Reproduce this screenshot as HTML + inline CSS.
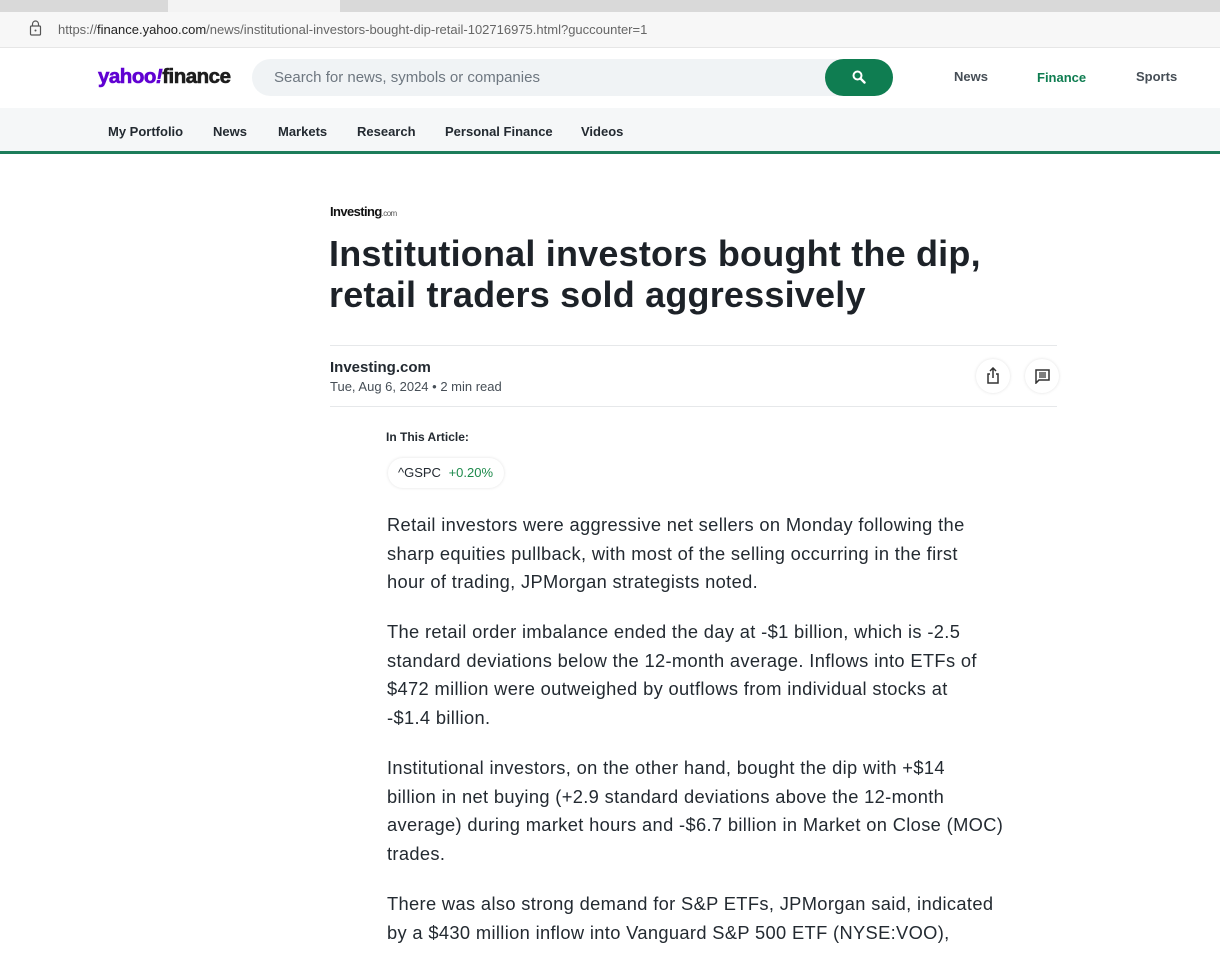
<!DOCTYPE html>
<html><head><meta charset="utf-8"><style>
*{margin:0;padding:0;box-sizing:border-box}
body{width:1220px;height:954px;overflow:hidden;background:#fff;font-family:"Liberation Sans",sans-serif;color:#232a31;position:relative}
.abs{position:absolute;white-space:nowrap}
.tabs{position:absolute;left:0;top:0;width:1220px;height:12px;background:#d9d9d9}
.tab{position:absolute;left:168px;top:0;width:172px;height:12px;background:#f3f3f3}
.addr{position:absolute;left:0;top:12px;width:1220px;height:36px;background:#f7f7f7;border-bottom:1px solid #e6e6e6}
.hdr{position:absolute;left:0;top:48px;width:1220px;height:60px;background:#fff}
.nav{position:absolute;left:0;top:108px;width:1220px;height:46px;background:#f5f7f8;border-bottom:3px solid #1d7d5a}
.search{position:absolute;left:252px;top:59px;width:640px;height:37px;background:#f0f3f5;border-radius:20px}
.sbtn{position:absolute;left:825px;top:59px;width:68px;height:37px;background:#0f7d51;border-radius:20px}
.nv{font-size:13px;font-weight:bold;color:#232a31;top:124px}
p.b{position:absolute;left:387px;font-size:18.3px;letter-spacing:0.35px;line-height:28.5px;color:#232a31;white-space:nowrap}
.circ{position:absolute;width:34px;height:34px;border-radius:50%;background:#fff;box-shadow:0 0 3px rgba(0,0,0,.12)}
</style></head><body>
<div class="tabs"><div class="tab"></div></div>
<div class="addr">
<svg class="abs" style="left:29px;top:8px" width="13" height="16" viewBox="0 0 13 16"><rect x="1.5" y="6" width="10" height="9" rx="1" fill="none" stroke="#555" stroke-width="1.2"/><path d="M3.5 6V4a3 3 0 0 1 6 0v2" fill="none" stroke="#555" stroke-width="1.2"/><circle cx="6.5" cy="10.5" r="1" fill="#555"/></svg>
<div class="abs" style="left:58px;top:10px;font-size:13px;color:#666">https://<span style="color:#222">finance.yahoo.com</span>/news/institutional-investors-bought-dip-retail-102716975.html?guccounter=1</div>
</div>
<div class="hdr"></div>
<div class="abs" style="left:98px;top:65px;font-size:20.5px;font-weight:900;letter-spacing:-0.5px;-webkit-text-stroke:0.6px currentColor"><span style="color:#6001d2">yahoo<i>!</i></span><span style="color:#1d1d1d">finance</span></div>
<div class="search"></div>
<div class="abs" style="left:274px;top:69px;font-size:15px;color:#6e7780">Search for news, symbols or companies</div>
<div class="sbtn"><svg class="abs" style="left:27px;top:11px" width="14" height="14" viewBox="0 0 14 14"><circle cx="5.5" cy="5.5" r="4" fill="none" stroke="#fff" stroke-width="2"/><path d="M8.5 8.5l4 4" stroke="#fff" stroke-width="2.4" stroke-linecap="round"/></svg></div>
<div class="abs" style="left:954px;top:69px;font-size:13px;font-weight:bold;color:#464e56">News</div>
<div class="abs" style="left:1037px;top:70px;font-size:13px;font-weight:bold;color:#0f7d51">Finance</div>
<div class="abs" style="left:1136px;top:69px;font-size:13px;font-weight:bold;color:#464e56">Sports</div>
<div class="nav"></div>
<div class="abs nv" style="left:108px">My Portfolio</div>
<div class="abs nv" style="left:213px">News</div>
<div class="abs nv" style="left:278px">Markets</div>
<div class="abs nv" style="left:357px">Research</div>
<div class="abs nv" style="left:445px">Personal Finance</div>
<div class="abs nv" style="left:581px">Videos</div>

<div class="abs" style="left:330px;top:204px;font-size:13px;font-weight:bold;letter-spacing:-0.6px;color:#111">Investing<span style="font-size:8px;font-weight:normal;color:#555">.com</span></div>
<div class="abs" style="left:329px;top:233px;font-size:36px;line-height:41px;font-weight:bold;letter-spacing:0.2px;color:#1d2228">Institutional investors bought the dip,<br>retail traders sold aggressively</div>
<div class="abs" style="left:330px;top:345px;width:727px;height:1px;background:#e6e8ea"></div>
<div class="abs" style="left:330px;top:359px;font-size:15px;font-weight:bold;color:#232a31">Investing.com</div>
<div class="abs" style="left:330px;top:379px;font-size:13px;color:#464e56">Tue, Aug 6, 2024 • 2 min read</div>
<div class="circ" style="left:976px;top:359px"><svg class="abs" style="left:10px;top:8px" width="14" height="17" viewBox="0 0 14 17"><path d="M7 1v10M4 4l3-3 3 3M4 7H2v9h10V7h-2" fill="none" stroke="#333" stroke-width="1.5"/></svg></div>
<div class="circ" style="left:1025px;top:359px"><svg class="abs" style="left:10px;top:10px" width="15" height="15" viewBox="0 0 15 15"><path d="M1 1h13v10H4l-3 3z" fill="none" stroke="#333" stroke-width="1.5"/><path d="M4 4h7M4 6h7M4 8h7" stroke="#333" stroke-width="1.2"/></svg></div>
<div class="abs" style="left:330px;top:406px;width:727px;height:1px;background:#e6e8ea"></div>
<div class="abs" style="left:386px;top:430px;font-size:12px;font-weight:bold;color:#232a31">In This Article:</div>
<div class="abs" style="left:388px;top:458px;width:116px;height:30px;border-radius:15px;box-shadow:0 0 3px rgba(0,0,0,.12)"></div>
<div class="abs" style="left:398px;top:465px;font-size:13px;color:#232a31">^GSPC <span style="color:#1e8a4c;margin-left:4px">+0.20%</span></div>

<p class="b" style="top:511px">Retail investors were aggressive net sellers on Monday following the<br>sharp equities pullback, with most of the selling occurring in the first<br>hour of trading, JPMorgan strategists noted.</p>
<p class="b" style="top:618px">The retail order imbalance ended the day at -$1 billion, which is -2.5<br>standard deviations below the 12-month average. Inflows into ETFs of<br>$472 million were outweighed by outflows from individual stocks at<br>-$1.4 billion.</p>
<p class="b" style="top:754px">Institutional investors, on the other hand, bought the dip with +$14<br>billion in net buying (+2.9 standard deviations above the 12-month<br>average) during market hours and -$6.7 billion in Market on Close (MOC)<br>trades.</p>
<p class="b" style="top:890px">There was also strong demand for S&amp;P ETFs, JPMorgan said, indicated<br>by a $430 million inflow into Vanguard S&amp;P 500 ETF (NYSE:VOO),</p>
</body></html>
